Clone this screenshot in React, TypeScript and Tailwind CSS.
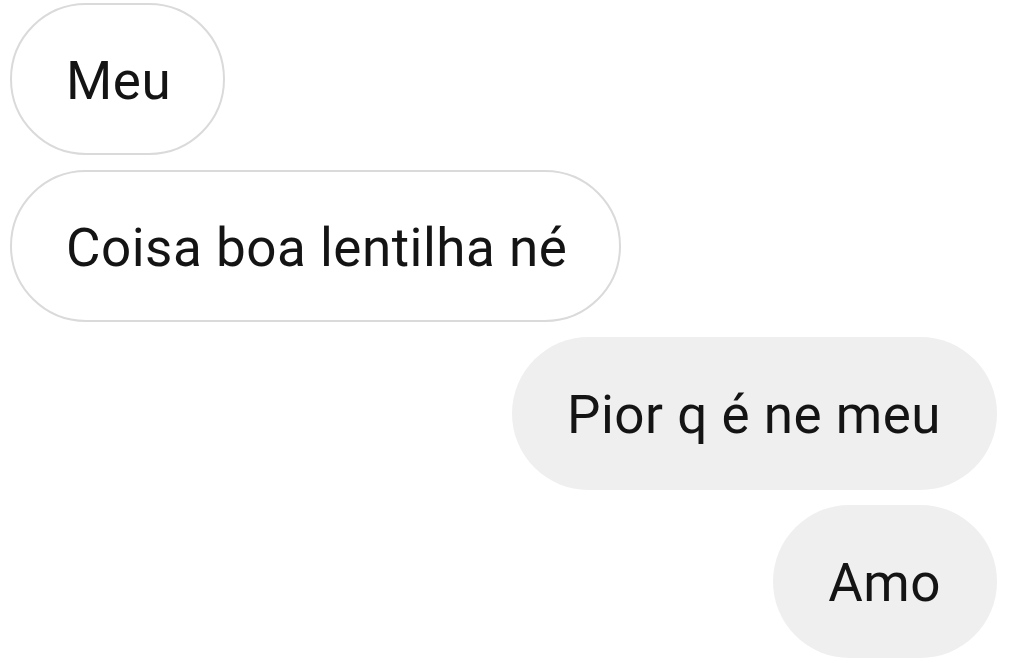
import React from "react";

type Msg = {text: string; mine: boolean};

const messages: Msg[] = [
    {text: "Meu", mine: false},
    {text: "Coisa boa lentilha né", mine: false},
    {text: "Pior q é ne meu", mine: true},
    {text: "Amo", mine: true},
];

const Bubble: React.FC<Msg> = ({text, mine}) => (
    <div className={mine ? "flex justify-end" : "flex justify-start"}>
        <div
            className={
                mine
                    ? "h-[153px] flex items-center pl-[55px] pr-[56px] rounded-full bg-[#efefef]"
                    : "h-[152px] flex items-center pl-[54px] pr-[52px] rounded-full bg-white border-2 border-[#dadada]"
            }
        >
            <span className="text-[53px] leading-none tracking-[0.5px] text-[#141414] whitespace-nowrap pt-[4px]">{text}</span>
        </div>
    </div>
);

export default function App() {
    return (
        <div
            className="w-[1024px] h-[662px] bg-white overflow-hidden pt-[3px] pl-[10px] pr-[27px] flex flex-col gap-[15px]"
            style={{fontFamily: "Roboto, 'Noto Sans', sans-serif"}}
        >
            {messages.map((m, i) => (
                <Bubble key={i} text={m.text} mine={m.mine}/>
            ))}
        </div>
    );
}
